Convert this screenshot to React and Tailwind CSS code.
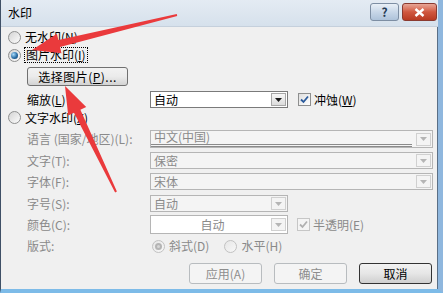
import React from 'react';

const Radio = ({ checked, disabled }) => (
  <span
    className={`w-[13px] h-[13px] rounded-full border flex items-center justify-center shrink-0 ${
      disabled ? 'border-[#c2c2c2] bg-linear-to-br from-[#e6e6e6] to-[#f8f8f8]' : 'border-[#8e8f8f] bg-linear-to-br from-[#d4d4d4] to-[#fcfcfc]'
    }`}
  >
    {checked && !disabled && (
      <span className="w-[7px] h-[7px] rounded-full bg-[radial-gradient(circle_at_35%_35%,#a9dcfb,#2a6ea6_55%,#0d3a62)]" />
    )}
    {checked && disabled && (
      <span className="w-[7px] h-[7px] rounded-full border-2 border-[#b4b4b4] bg-[#d6d6d6]" />
    )}
  </span>
);

const Check = ({ disabled }) => (
  <span
    className={`w-[13px] h-[13px] border flex items-center justify-center shrink-0 ${
      disabled ? 'border-[#c6c6c6] bg-[#f4f4f4]' : 'border-[#8e8f8f] bg-linear-to-br from-[#dedede] to-white'
    }`}
  >
    <svg width="9" height="9" viewBox="0 0 9 9">
      <path d="M1 4.5 L3.5 7 L8 1.5" fill="none" stroke={disabled ? '#b0b0b0' : '#2b5b9c'} strokeWidth="1.8" />
    </svg>
  </span>
);

const Arrow = ({ disabled }) => (
  <span
    className={`w-[15px] h-[13px] mr-[1px] border flex items-center justify-center shrink-0 ${
      disabled ? 'border-[#d0d0d0] bg-[#f4f4f4]' : 'border-[#a7a7a7] bg-linear-to-b from-[#f7f7f7] to-[#dcdcdc]'
    }`}
  >
    <svg width="7" height="4" viewBox="0 0 7 4">
      <path d="M0 0 H7 L3.5 4 Z" fill={disabled ? '#b5b5b5' : '#1a1a1a'} />
    </svg>
  </span>
);

const Select = ({ value, width, disabled, center, underline, white }) => (
  <div
    className={`h-full border flex items-center ${
      disabled ? 'border-[#b5b5b5] text-[#8a8a8a]' : 'border-[#7a7a7a] text-black'
    } ${white || !disabled ? 'bg-white' : 'bg-[#f4f4f4]'}`}
    style={{ width }}
  >
    <span
      className={`flex-1 pl-[3px] ${center ? 'text-center' : ''} ${
        underline ? 'border-b-[3px] border-double border-[#8a8a8a] mr-[4px] pb-[1px]' : ''
      }`}
    >
      {value}
    </span>
    <Arrow disabled={disabled} />
  </div>
);

const Label = ({ children }) => <span className="w-[123px] text-[#8a8a8a]">{children}</span>;

const Button = ({ children, disabled, focus, width = 73 }) => (
  <button
    className={`h-full rounded-[3px] border flex items-center justify-center whitespace-nowrap ${
      disabled
        ? 'border-[#b8bcbf] bg-[#f4f4f4] text-[#8d8d8d]'
        : focus
        ? 'border-[#333] bg-linear-to-b from-[#f2f2f2] via-[#e6e6e6] to-[#cfcfcf] text-black'
        : 'border-[#707070] bg-linear-to-b from-[#f2f2f2] via-[#ebebeb] to-[#d3d3d3] text-black'
    }`}
    style={{ width }}
  >
    {children}
  </button>
);

export default function App() {
  return (
    <div className="w-[443px] h-[293px] relative overflow-hidden flex flex-col bg-[#f0f0f0] border-l border-[#3f5066] border-r-[5px] border-r-[#8fb7de] border-b-[4px] border-b-[#7dbbe8] font-['Noto_Sans_CJK_SC',sans-serif] text-[12px] leading-none text-black">
      {/* title bar */}
      <div className="h-[27px] flex items-center pl-[7px] pr-[1px] bg-linear-to-b from-[#e4ebf3] to-[#d6e1ec] border-b border-[#c5d0dc]">
        <span className="text-[12px]">水印</span>
        <div className="ml-auto flex gap-[3px] self-start mt-[3px]">
          <span className="w-[29px] h-[18px] rounded-[3px] border border-[#7d8ea3] bg-linear-to-b from-[#e9f0f7] via-[#c8d7e8] to-[#aec3da] flex items-center justify-center text-[#253a54] text-[12px] font-bold">
            ?
          </span>
          <span className="w-[35px] h-[18px] rounded-[3px] border border-[#8a3a30] bg-linear-to-b from-[#e7a596] via-[#d0573f] to-[#b83a22] flex items-center justify-center">
            <svg width="11" height="9" viewBox="0 0 11 9">
              <path d="M1.5 1 L9.5 8 M9.5 1 L1.5 8" stroke="#fff" strokeWidth="2.4" />
            </svg>
          </span>
        </div>
      </div>

      <div className="flex flex-col pl-[7px] border-r border-[#5a6f86] flex-1">
        <div className="mt-[1px] h-[18px] flex items-center gap-[4px]">
          <Radio />
          <span>无水印(<u>N</u>)</span>
        </div>
        <div className="h-[18px] flex items-center gap-[3px]">
          <Radio checked />
          <span className="border border-dotted border-black px-[1px] py-[1px]">图片水印(<u>I</u>)</span>
        </div>
        <div className="mt-[3px] h-[19px] pl-[19px]">
          <Button width={101}>
            <span className="tracking-[0.5px]">选择图片(<u>P</u>)...</span>
          </Button>
        </div>
        <div className="mt-[5px] h-[17px] flex items-center pl-[19px]">
          <span className="w-[123px]">缩放(<u>L</u>)</span>
          <Select value="自动" width={138} />
          <span className="ml-[10px] mr-[3px]">
            <Check />
          </span>
          <span>冲蚀(<u>W</u>)</span>
        </div>
        <div className="h-[19px] flex items-center gap-[4px]">
          <Radio />
          <span>文字水印(<u>X</u>)</span>
        </div>
        <div className="mt-[3px] h-[18px] flex items-center pl-[19px]">
          <Label>语言 (国家/地区)(L):</Label>
          <Select value="中文(中国)" width={283} disabled underline />
        </div>
        <div className="mt-[4px] h-[17px] flex items-center pl-[19px]">
          <Label>文字(T):</Label>
          <Select value="保密" width={283} disabled />
        </div>
        <div className="mt-[4px] h-[17px] flex items-center pl-[19px]">
          <Label>字体(F):</Label>
          <Select value="宋体" width={283} disabled />
        </div>
        <div className="mt-[5px] h-[17px] flex items-center pl-[19px]">
          <Label>字号(S):</Label>
          <Select value="自动" width={138} disabled />
        </div>
        <div className="mt-[3px] h-[19px] flex items-center pl-[19px]">
          <Label>颜色(C):</Label>
          <Select value="自动" width={138} disabled center white />
          <span className="ml-[9px] mr-[3px]">
            <Check disabled />
          </span>
          <span className="text-[#8a8a8a]">半透明(E)</span>
        </div>
        <div className="mt-[3px] h-[18px] flex items-center pl-[19px]">
          <Label>版式:</Label>
          <span className="ml-[2px] mr-[4px]">
            <Radio checked disabled />
          </span>
          <span className="text-[#8a8a8a]">斜式(D)</span>
          <span className="ml-[15px] mr-[4px]">
            <Radio disabled />
          </span>
          <span className="text-[#8a8a8a]">水平(H)</span>
        </div>
        <div className="mt-[8px] h-[21px] flex justify-end gap-[12px] pr-[5px]">
          <Button disabled>应用(A)</Button>
          <Button disabled>确定</Button>
          <Button focus>取消</Button>
        </div>
      </div>

      {/* red annotation arrows */}
      <svg className="absolute inset-0 pointer-events-none" width="443" height="293" viewBox="0 0 443 293">
        <polygon
          points="175.8,14 57.4,40.1 55.9,33.8 31,50 60.5,53.2 59,46.9 176.2,16"
          fill="#ea3a3c"
        />
        <polygon
          points="115.9,191.6 79.4,109.7 85.2,106.9 64,86 67.2,115.5 73,112.7 114.1,192.4"
          fill="#ea3a3c"
        />
      </svg>
    </div>
  );
}
